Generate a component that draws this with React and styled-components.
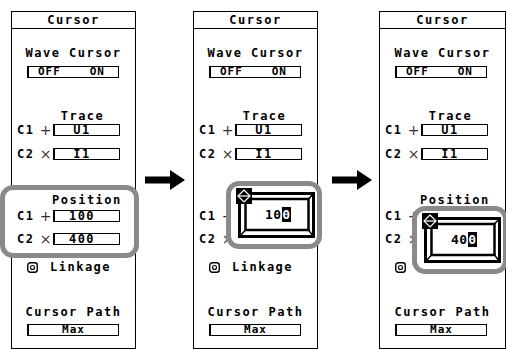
import React from 'react';
import styled, { createGlobalStyle } from 'styled-components';

const GlobalStyle = createGlobalStyle`
  html, body { margin: 0; padding: 0; background: #fff; }
  body { font-family: "DejaVu Sans Mono", monospace; color: #000; }
`;

const Stage = styled.div`
  width: 506px;
  height: 350px;
  overflow: hidden;
  display: flex;
  align-items: flex-start;
  padding: 11px 0 0 11px;
  box-sizing: border-box;
  background: #fff;
`;

const Panel = styled.div`
  flex: none;
  width: ${p => p.$w}px;
  height: 338px;
  box-sizing: border-box;
  border: 1px solid #000;
  display: flex;
  flex-direction: column;
  position: relative;
  background: #fff;
`;

const TitleBar = styled.div`
  height: 16px;
  border-bottom: 1px solid #000;
  text-align: center;
  font: bold 12px/16px "DejaVu Sans Mono", monospace;
  letter-spacing: 1.5px;
`;

const Label = styled.div`
  margin-top: ${p => p.$mt}px;
  margin-left: ${p => p.$ml || 0}px;
  width: ${p => p.$w ? `${p.$w}px` : 'auto'};
  height: 12px;
  text-align: ${p => p.$align || 'center'};
  white-space: nowrap;
  font: bold 12px/12px "DejaVu Sans Mono", monospace;
  letter-spacing: 1.5px;
`;

const WideBox = styled.div`
  margin: ${p => p.$mt}px 0 0 15px;
  width: 92px;
  height: 12px;
  box-sizing: border-box;
  border: 1px solid #000;
  border-left-width: 2px;
  display: flex;
  justify-content: ${p => p.$split ? 'space-between' : 'center'};
  padding: ${p => p.$split ? '0 13px 0 9px' : '0'};
  font: bold 11px/10px "DejaVu Sans Mono", monospace;
  letter-spacing: 1px;
`;

const Row = styled.div`
  position: relative;
  display: flex;
  align-items: center;
  height: 12px;
  margin-top: ${p => p.$mt}px;
  padding-left: 5px;
`;

const CursorName = styled.span`
  width: 21px;
  font: bold 12px/12px "DejaVu Sans Mono", monospace;
  letter-spacing: 1.5px;
`;

const Sign = styled.span`
  width: 15px;
  text-align: center;
  font: 14px/12px "DejaVu Sans", sans-serif;
  color: #333;
`;

const Field = styled.div`
  width: 67px;
  height: 12px;
  box-sizing: border-box;
  border: 1px solid #000;
  border-left-width: 2px;
  padding-right: 10px;
  text-align: center;
  font: bold 12px/10px "DejaVu Sans Mono", monospace;
  letter-spacing: 1.5px;
`;

const Group = styled.div`
  margin: 25px -4px 0 -12px;
  border: 5px solid ${p => p.$ring ? '#8a8a8a' : 'transparent'};
  border-radius: 13px;
  background: ${p => p.$ring ? '#fff' : 'transparent'};
  padding: 4px 0 8px 7px;
  position: relative;
  z-index: 1;
`;

const LinkRow = styled.div`
  display: flex;
  align-items: center;
  height: 12px;
  margin-top: 3px;
  padding-left: 15px;
  gap: 12px;
  font: bold 12px/12px "DejaVu Sans Mono", monospace;
  letter-spacing: 1.5px;
`;

const ArrowSlot = styled.div`
  flex: none;
  width: ${p => p.$w}px;
  box-sizing: border-box;
  padding: 159px 0 0 ${p => p.$pl}px;
  display: flex;
`;

const Popup = styled.div`
  position: absolute;
  left: ${p => p.$left}px;
  top: ${p => p.$top}px;
  width: 96px;
  height: 68px;
  box-sizing: border-box;
  border: 5px solid #8a8a8a;
  border-radius: 13px;
  background: #fff;
  padding: 6px 0 0 7px;
  z-index: 5;
`;

const Frame = styled.div`
  position: relative;
  width: 77px;
  height: 46px;
  display: flex;
  align-items: center;
  justify-content: flex-end;
  padding-right: 24px;
  box-sizing: border-box;
`;

const FrameArt = styled.svg`
  position: absolute;
  left: 0;
  top: 0;
`;

const Value = styled.span`
  position: relative;
  display: flex;
  align-items: center;
  margin-top: -1px;
  font: bold 13px/15px "DejaVu Sans Mono", monospace;
  letter-spacing: 0.5px;
`;

const Caret = styled.span`
  background: #000;
  color: #fff;
  padding: 0 0.5px;
`;

const Spinner = styled.svg`
  position: absolute;
  left: -2px;
  top: -4px;
`;

const Arrow = () => (
  <svg width="40" height="20" viewBox="0 0 40 20">
    <rect x="0" y="6.5" width="26" height="7" fill="#000" />
    <polygon points="25,0 40,10 25,20" fill="#000" />
  </svg>
);

const LinkIcon = () => (
  <svg width="11" height="11" viewBox="0 0 11 11">
    <rect x="0.75" y="0.75" width="9.5" height="9.5" rx="2.5" fill="none" stroke="#000" strokeWidth="1.4" />
    <circle cx="5.5" cy="5.5" r="2" fill="none" stroke="#000" strokeWidth="1.1" />
  </svg>
);

const EditPopup = ({ value, left, top }) => (
  <Popup $left={left} $top={top}>
    <Frame>
      <FrameArt width="77" height="46" viewBox="0 0 77 46">
        <rect x="1.5" y="1.5" width="74" height="43" fill="#fff" stroke="#000" strokeWidth="3" />
        <path d="M1.5 1.5 L7.5 7 M75.5 1.5 L70.5 7 M1.5 44.5 L7.5 38 M75.5 44.5 L70.5 38" stroke="#000" strokeWidth="1.5" />
        <rect x="7.5" y="7" width="63" height="31" fill="#fff" stroke="#000" strokeWidth="2.5" />
      </FrameArt>
      <Spinner width="16" height="16" viewBox="0 0 16 16">
        <rect width="16" height="16" fill="#000" />
        <polygon points="8,2 14,8 8,14 2,8" fill="none" stroke="#fff" strokeWidth="1.2" />
        <line x1="2" y1="8" x2="14" y2="8" stroke="#fff" strokeWidth="1.2" />
      </Spinner>
      <Value>
        {value.slice(0, -1)}
        <Caret>{value.slice(-1)}</Caret>
      </Value>
    </Frame>
  </Popup>
);

const CursorRow = ({ name, sign, value, mt, editing, top }) => (
  <Row $mt={mt}>
    <CursorName>{name}</CursorName>
    <Sign>{sign}</Sign>
    <Field>{editing ? null : value}</Field>
    {editing && <EditPopup value={value} left={32} top={top} />}
  </Row>
);

const CursorPanel = ({ w, ring, edit }) => (
  <Panel $w={w}>
    <TitleBar>Cursor</TitleBar>
    <Label $mt={18}>Wave Cursor</Label>
    <WideBox $mt={7} $split>
      <span>OFF</span>
      <span>ON</span>
    </WideBox>
    <Label $mt={32} $ml={41} $w={59}>Trace</Label>
    <CursorRow name="C1" sign="+" value="U1" mt={2} />
    <CursorRow name="C2" sign="×" value="I1" mt={12} />
    <Group $ring={ring}>
      <Label $mt={0} $ml={40} $align="left">Position</Label>
      <CursorRow name="C1" sign="+" value="100" mt={4} editing={edit === 1} top={-29} />
      <CursorRow name="C2" sign="×" value="400" mt={11} editing={edit === 2} top={-27} />
    </Group>
    <LinkRow>
      <LinkIcon />
      <span>Linkage</span>
    </LinkRow>
    <Label $mt={33}>Cursor Path</Label>
    <WideBox $mt={6}>Max</WideBox>
  </Panel>
);

export default function App() {
  return (
    <>
      <GlobalStyle />
      <Stage>
        <CursorPanel w={125} ring />
        <ArrowSlot $w={57} $pl={9}><Arrow /></ArrowSlot>
        <CursorPanel w={125} edit={1} />
        <ArrowSlot $w={61} $pl={14}><Arrow /></ArrowSlot>
        <CursorPanel w={127} edit={2} />
      </Stage>
    </>
  );
}
